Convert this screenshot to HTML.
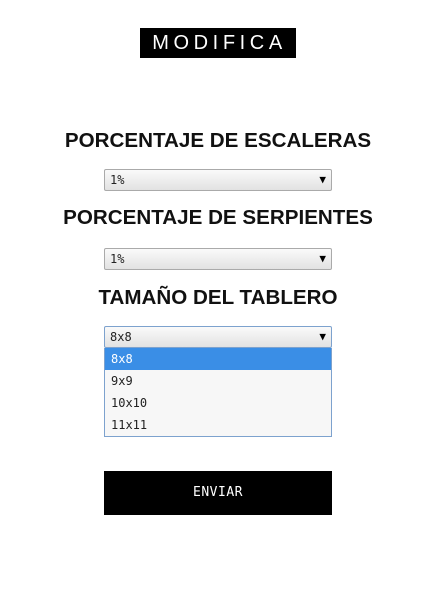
<!DOCTYPE html>
<html><head><meta charset="utf-8"><style>
body{margin:0;width:429px;height:593px;background:#fff;position:relative;font-family:"Liberation Sans",sans-serif;overflow:hidden}
.a{position:absolute}
.title{left:140px;top:28px;width:156px;height:30px;background:#000;color:#fff;font-size:20px;letter-spacing:4.6px;text-align:center;line-height:30px;text-indent:3px}
h2{position:absolute;left:0;width:436px;margin:0;text-align:center;font-size:20.6px;font-weight:bold;color:#111}
.sel{position:absolute;left:104px;width:226px;height:20px;border:1px solid #aaa;border-radius:2px;background:linear-gradient(#fafafa,#e2e2e2);font-family:"DejaVu Sans Mono","Liberation Mono",monospace;font-size:12px;line-height:20px;color:#222;box-sizing:content-box}
.sel span{padding-left:5px}
.sel i{position:absolute;right:5px;top:0;font-style:normal;font-size:11px;color:#000}
.list{left:104px;top:348px;width:226px;height:88px;border:1px solid #7da2ce;border-top:none;background:#f7f7f7;font-family:"DejaVu Sans Mono","Liberation Mono",monospace;font-size:12px;color:#222}
.list div{height:22px;line-height:22px;padding-left:6px}
.btn{left:104px;top:471px;width:228px;height:44px;background:#000;color:#fff;text-align:center;line-height:44px;font-family:"DejaVu Sans Mono","Liberation Mono",monospace;font-size:13px;letter-spacing:0.5px}
</style></head><body>
<div class="a title">MODIFICA</div>
<h2 style="top:129px">PORCENTAJE DE ESCALERAS</h2>
<div class="sel" style="top:169px"><span>1%</span><i>▼</i></div>
<h2 style="top:206px">PORCENTAJE DE SERPIENTES</h2>
<div class="sel" style="top:248px"><span>1%</span><i>▼</i></div>
<h2 style="top:286px">TAMAÑO DEL TABLERO</h2>
<div class="sel" style="top:326px;border-color:#7da2ce"><span>8x8</span><i>▼</i></div>
<div class="a list"><div style="background:#3a8ee6;color:#fff">8x8</div><div>9x9</div><div>10x10</div><div>11x11</div></div>
<div class="a btn">ENVIAR</div>
</body></html>
